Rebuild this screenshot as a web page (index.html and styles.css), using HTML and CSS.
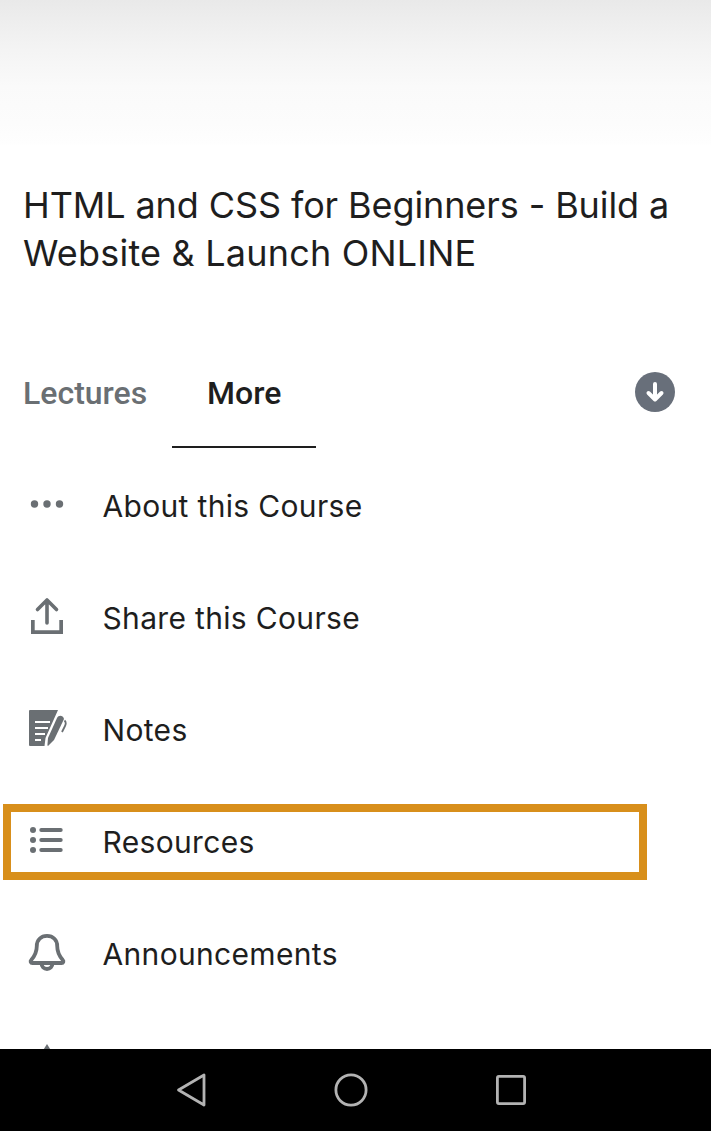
FILE: index.html
```html
<!DOCTYPE html>
<html lang="en">
<head>
<meta charset="utf-8">
<title>Course</title>
<link rel="stylesheet" href="styles.css">
</head>
<body>
<div class="screen">
  <main class="content">
    <div class="hero"></div>
    <h1 class="title">HTML and CSS for Beginners - Build a <span class="title-tail">Website &amp; Launch ONLINE</span></h1>
    <div class="tabs">
      <div class="tab">Lectures</div>
      <div class="tab tab-active">More</div>
      <svg class="download" viewBox="0 0 40 40" aria-hidden="true">
        <circle cx="20" cy="20" r="20" fill="#686f7a"/>
        <path d="M20 12v15M13.500 21l6.500 6.500 6.500-6.500" fill="none" stroke="#fff" stroke-width="4" stroke-linecap="round" stroke-linejoin="round"/>
      </svg>
    </div>
    <ul class="menu">
      <li class="row">
        <span class="icon-box"><svg class="icon" viewBox="0 0 40 40"><circle cx="7.500" cy="20" r="3.700"/><circle cx="20" cy="20" r="3.700"/><circle cx="32.500" cy="20" r="3.700"/></svg></span>
        <span>About this Course</span>
      </li>
      <li class="row">
        <span class="icon-box"><svg class="icon" viewBox="0 0 40 40"><path class="line" d="M20 27V4M10.500 13.500 20 4l9.500 9.500" stroke-width="3.600" stroke-linecap="round" stroke-linejoin="round"/><path d="M4 24h3.700v10.300h24.600V24H36v14H4z"/></svg></span>
        <span>Share this Course</span>
      </li>
      <li class="row">
        <span class="icon-box"><svg class="icon" viewBox="0 0 40 40"><path d="M3 2H31L18.500 30L17.500 38H3a1 1 0 0 1-1-1V3a1 1 0 0 1 1-1z"/><path class="cut" d="M8 14H23M8 20H21M8 26H18M8 32H14" stroke-width="2.200"/><path d="M30 10c1.500-3 6-3 7 1L27 32l-6 6-.6-.8.600-7.200z"/><path class="line" d="M37.500 12.500q2.200 2 .500 5.500l-3 6" stroke-width="1.800"/></svg></span>
        <span>Notes</span>
      </li>
      <li class="row">
        <span class="icon-box"><svg class="icon" viewBox="0 0 40 40"><circle cx="6" cy="10" r="3"/><circle cx="6" cy="20" r="3"/><circle cx="6" cy="30" r="3"/><path class="line" d="M14.300 10H33.700M14.300 20H33.700M14.300 30H33.700" stroke-width="4" stroke-linecap="round"/></svg></span>
        <span>Resources</span>
      </li>
      <li class="row">
        <span class="icon-box"><svg class="icon" viewBox="0 0 40 40"><path class="line" d="M20 3.900c-6.200 0-10.200 4.300-10.200 10 0 7-2.300 10.300-5.600 14.100-1.200 1.300-.5 3 1.200 3h29.200c1.700 0 2.400-1.700 1.200-3-3.300-3.800-5.600-7.100-5.600-14.100 0-5.700-4-10-10.200-10z" stroke-width="3.800" stroke-linejoin="round"/><path class="line" d="M14.500 31c0 4 2.500 6 5.500 6s5.500-2 5.500-6" stroke-width="3.800"/></svg></span>
        <span>Announcements</span>
      </li>
      <li class="row">
        <span class="icon-box"><svg class="icon" viewBox="0 0 40 40"><path d="M20 0l5 8H15z"/></svg></span>
        <span></span>
      </li>
    </ul>
  </main>
  <nav class="navbar">
    <svg class="nav-icon" viewBox="0 0 34 34"><path class="nav-line" d="M30 2v30L4.500 17z" stroke-linejoin="round"/></svg>
    <svg class="nav-icon" viewBox="0 0 34 34"><circle class="nav-line" cx="17" cy="17" r="15.100"/></svg>
    <svg class="nav-icon" viewBox="0 0 34 34"><rect class="nav-line" x="3.400" y="3.400" width="27.200" height="27.200" rx="1.500"/></svg>
  </nav>
  <div class="highlight"></div>
</div>
</body>
</html>
```
FILE: styles.css
```css
* { box-sizing: border-box; }
html, body { margin: 0; padding: 0; background: #fff; }
.screen {
  position: relative;
  width: 711px;
  height: 1131px;
  overflow: hidden;
  display: flex;
  flex-direction: column;
  font-family: "Inter", "Liberation Sans", sans-serif;
  color: #1e1e1e;
}
.content { flex: 1; min-height: 0; overflow: hidden; }
.hero {
  height: 145px;
  background: linear-gradient(to bottom, #e9e9e9 0%, #f4f4f4 35%, #fafafa 60%, #fcfcfc 85%, #fefefe 99%, #fff 100%);
}
.title {
  margin: 36px 23px 0;
  font-size: 36px;
  line-height: 48px;
  font-weight: 400;
  height: 96px;
  letter-spacing: -0.1px;
}
.title-tail { letter-spacing: 0.2px; }
.tabs {
  display: flex;
  align-items: flex-start;
  margin-top: 72px;
  height: 99px;
  padding-left: 23px;
}
.tab {
  font-family: "Roboto", sans-serif;
  font-size: 32px;
  font-weight: 500;
  line-height: 88px;
  height: 99px;
  color: #6a6f73;
}
.tab-active {
  color: #1e1e1e;
  margin-left: 25px;
  width: 144px;
  text-align: center;
  border-bottom: 2px solid #1e1e1e;
}
.download { margin-left: auto; margin-right: 36px; margin-top: 23px; width: 40px; height: 40px; }
.menu { list-style: none; margin: 2px 0 0; padding: 0; }
.row {
  display: flex;
  align-items: center;
  height: 112px;
  padding-left: 27px;
  font-size: 30px;
  letter-spacing: 0.33px;
  white-space: nowrap;
}
.icon-box { width: 75.5px; flex: none; display: flex; margin-bottom: 4px; }
.icon { width: 40px; height: 40px; fill: #6a6f73; }
.line { fill: none; stroke: #6a6f73; }
.cut { fill: none; stroke: #fff; }
.navbar {
  flex: none;
  height: 82px;
  padding-right: 10px;
  background: #000;
  display: flex;
  justify-content: center;
  align-items: center;
  gap: 126px;
}
.nav-icon { width: 34px; height: 34px; }
.nav-line { fill: none; stroke: #b3b3b3; stroke-width: 2.8; }
.highlight {
  position: absolute;
  left: 3px;
  top: 804px;
  width: 644px;
  height: 76px;
  border: 8px solid #d88f1b;
}
```
